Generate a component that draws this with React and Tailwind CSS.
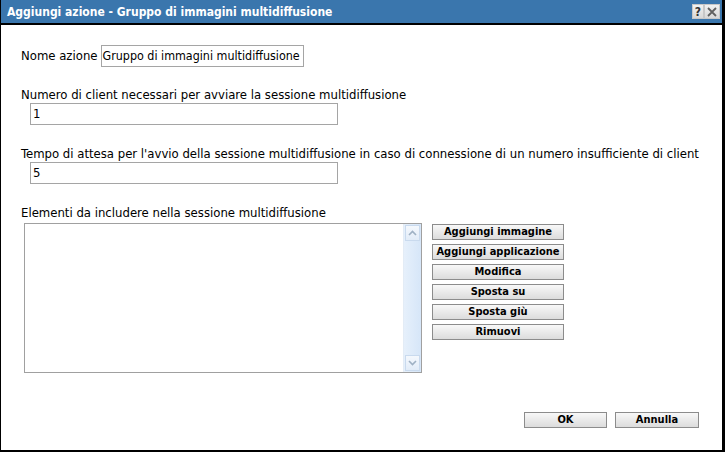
import React from 'react';

const font = { fontFamily: '"DejaVu Sans Condensed", "DejaVu Sans", sans-serif' };

const Btn = ({ children, className = '' }) => (
  <button
    className={`h-[16px] border border-[#8c8c8c] bg-gradient-to-b from-[#f8f8f8] to-[#dcdcdc] text-[11px] font-bold leading-[14px] text-black ${className}`}
  >
    {children}
  </button>
);

const Field = ({ value, className = '', size = 'text-[13px] pl-[2px]' }) => (
  <div className={`h-[22px] border border-[#a5a5a5] bg-white overflow-hidden whitespace-nowrap leading-[20px] text-black ${size} ${className}`}>
    {value}
  </div>
);

const App = () => {
  return (
    <div
      className="w-[725px] h-[452px] flex flex-col bg-white border-l border-r-[3px] border-b-2 border-black overflow-hidden"
      style={font}
    >
      {/* Title bar */}
      <div className="h-[25px] shrink-0 flex items-center bg-[#3a76ad] border-b-2 border-black pl-[6px] pr-[2px]">
        <span className="text-white font-bold text-[12px] leading-none grow">
          Aggiungi azione - Gruppo di immagini multidiffusione
        </span>
        <div className="flex">
          <div className="w-[12px] h-[15px] bg-gradient-to-b from-[#f2f2f2] to-[#d8d8d8] border border-[#c8c8c8] flex items-center justify-center text-[12px] font-bold text-[#333] leading-none">
            ?
          </div>
          <div className="w-[16px] h-[15px] bg-gradient-to-b from-[#f2f2f2] to-[#d8d8d8] border border-[#c8c8c8] flex items-center justify-center">
            <svg width="10" height="10" viewBox="0 0 10 10">
              <path d="M1 1 L9 9 M9 1 L1 9" stroke="#606060" strokeWidth="1.8" />
            </svg>
          </div>
        </div>
      </div>

      {/* Body */}
      <div className="flex-1 flex flex-col pl-[20px] pt-[20px] text-[13px] leading-[14px] text-black">
        <div className="flex items-center gap-[3px]">
          <span>Nome azione</span>
          <Field value="Gruppo di immagini multidiffusione" className="w-[203px]" size="text-[12.4px] pl-[1px]" />
        </div>

        <div className="mt-[21px]">Numero di client necessari per avviare la sessione multidiffusione</div>
        <Field value="1" className="w-[308px] ml-[9px] mt-[1px]" />

        <div className="mt-[22px] whitespace-nowrap">
          Tempo di attesa per l'avvio della sessione multidiffusione in caso di connessione di un numero insufficiente di client
        </div>
        <Field value="5" className="w-[308px] ml-[9px] mt-[1px]" />

        <div className="mt-[22px]">Elementi da includere nella sessione multidiffusione</div>
        <div className="flex mt-[3px] ml-[3px]">
          <div className="w-[398px] h-[150px] border border-[#a0a0a0] bg-white flex justify-end">
            <div className="w-[18px] h-full bg-gradient-to-r from-[#e6f0fb] to-[#d6e6f8] border-l border-[#e3ecf6] flex flex-col justify-between py-[1px]">
              <div className="h-[16px] mx-[1px] border border-[#c9daee] bg-gradient-to-b from-[#f4f8fd] to-[#e2ecf8] flex items-center justify-center">
                <svg width="9" height="6" viewBox="0 0 9 6">
                  <path d="M1 5 L4.5 1.5 L8 5" fill="none" stroke="#9fb1c4" strokeWidth="1.6" />
                </svg>
              </div>
              <div className="h-[16px] mx-[1px] border border-[#c9daee] bg-gradient-to-b from-[#f4f8fd] to-[#e2ecf8] flex items-center justify-center">
                <svg width="9" height="6" viewBox="0 0 9 6">
                  <path d="M1 1 L4.5 4.5 L8 1" fill="none" stroke="#9fb1c4" strokeWidth="1.6" />
                </svg>
              </div>
            </div>
          </div>
          <div className="flex flex-col gap-[4px] ml-[10px] mt-[1px] w-[132px]">
            <Btn>Aggiungi immagine</Btn>
            <Btn>Aggiungi applicazione</Btn>
            <Btn>Modifica</Btn>
            <Btn>Sposta su</Btn>
            <Btn>Sposta giù</Btn>
            <Btn>Rimuovi</Btn>
          </div>
        </div>

        <div className="mt-auto flex justify-end gap-[8px] pr-[23px] pb-[22px]">
          <Btn className="w-[83px]">OK</Btn>
          <Btn className="w-[84px]">Annulla</Btn>
        </div>
      </div>
    </div>
  );
};

export default App;
